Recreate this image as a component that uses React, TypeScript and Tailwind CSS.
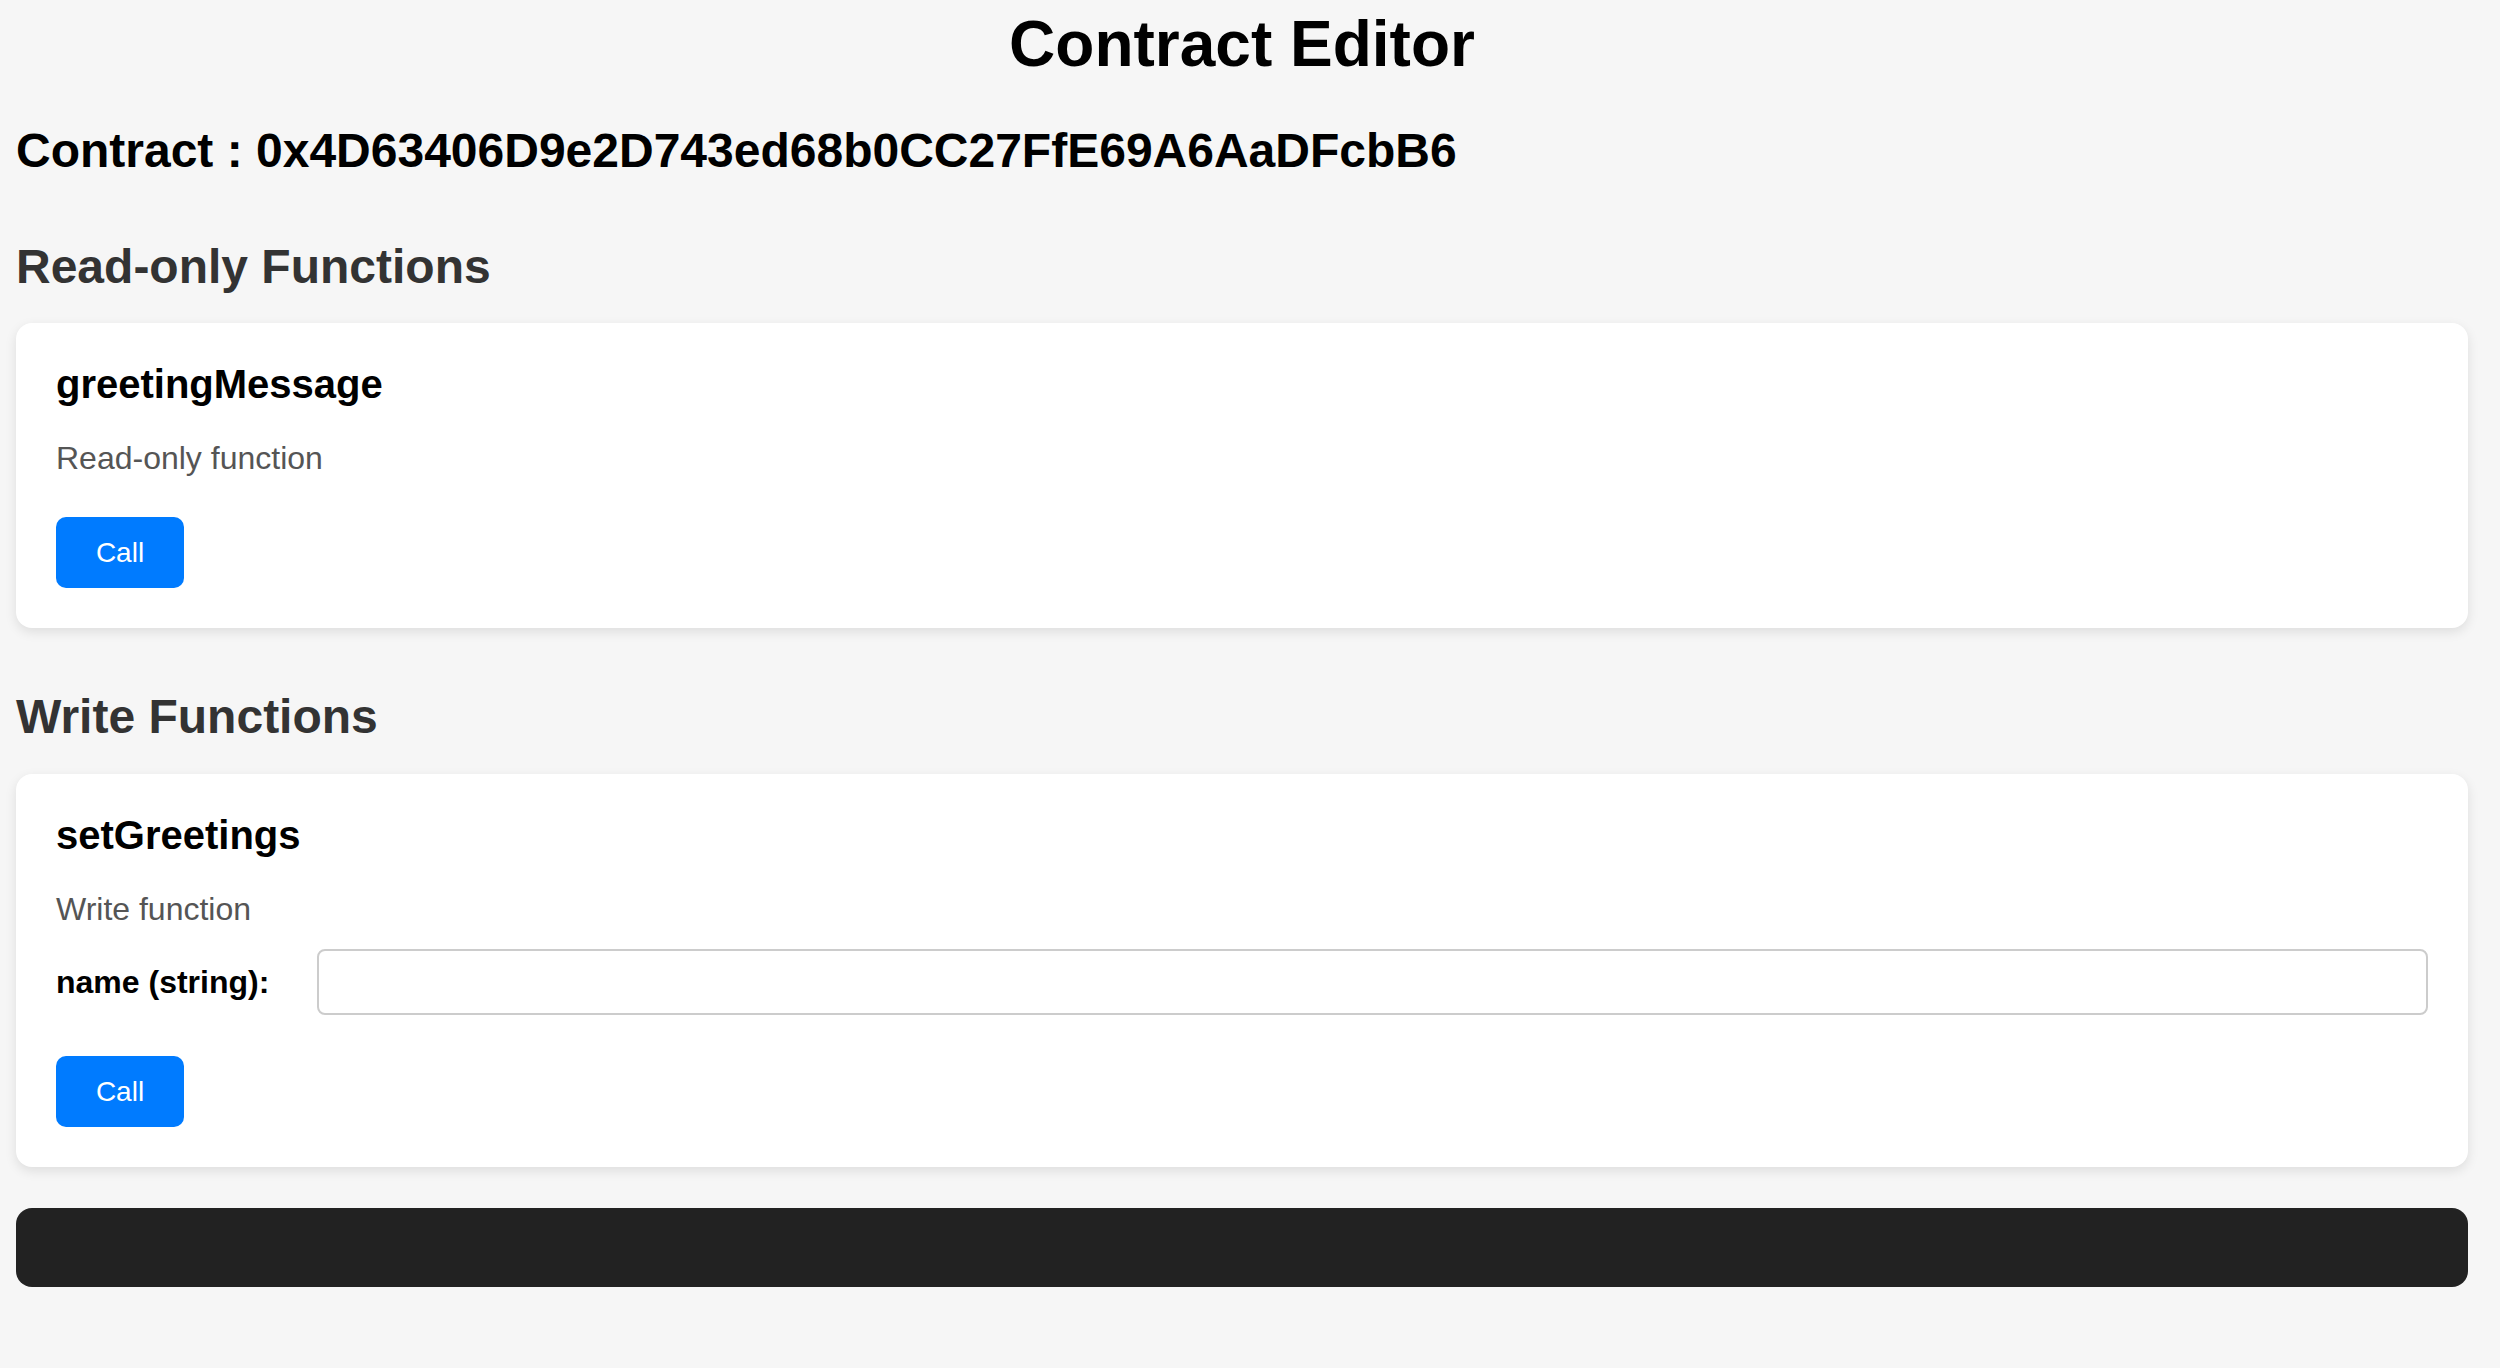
import { useState } from "react"

type AbiInput = {
  name: string
  type: string
}

type ContractFunction = {
  name: string
  kind: "read" | "write"
  inputs: AbiInput[]
}

const CONTRACT_ADDRESS = "0x4D63406D9e2D743ed68b0CC27FfE69A6AaDFcbB6"

const functions: ContractFunction[] = [
  { name: "greetingMessage", kind: "read", inputs: [] },
  { name: "setGreetings", kind: "write", inputs: [{ name: "name", type: "string" }] },
]

function FunctionCard({ fn }: { fn: ContractFunction }) {
  const [values, setValues] = useState<Record<string, string>>({})

  return (
    <div className="mt-[29px] rounded-[16px] bg-white p-[40px] shadow-[0_4px_12px_rgba(0,0,0,0.1)]">
      <h3 className="text-[40px] font-bold leading-[43px] text-black">{fn.name}</h3>
      <p className="mt-[34px] text-[32px] leading-[37px] text-[#555]">
        {fn.kind === "read" ? "Read-only function" : "Write function"}
      </p>
      {fn.inputs.map((input) => (
        <div key={input.name} className="mt-[21px] flex items-center">
          <label className="w-[241px] mr-[20px] shrink-0 text-[32px] font-bold leading-[37px] text-black">
            {input.name} ({input.type}):
          </label>
          <input
            type="text"
            value={values[input.name] ?? ""}
            onChange={(e) => setValues({ ...values, [input.name]: e.target.value })}
            className="h-[66px] flex-1 rounded-[8px] border-2 border-[#ccc] bg-white px-[16px] text-[28px] outline-none"
          />
        </div>
      ))}
      <button
        className={`${fn.inputs.length > 0 ? "mt-[41px]" : "mt-[40px]"} block h-[71px] w-[128px] rounded-[10px] bg-[#007bff] text-[28px] leading-[32px] text-white`}
      >
        Call
      </button>
    </div>
  )
}

export default function App() {
  const readFns = functions.filter((f) => f.kind === "read")
  const writeFns = functions.filter((f) => f.kind === "write")

  return (
    <div
      className="min-h-screen bg-[#f6f6f6] pl-[16px] pr-[32px] pt-[7px] pb-[80px]"
      style={{ fontFamily: '"Liberation Sans", Arial, Helvetica, sans-serif' }}
    >
      <h1 className="text-center text-[64px] font-bold leading-[74px] text-black">Contract Editor</h1>
      <h2 className="mt-[42px] text-[48px] font-bold leading-[55px] text-black">
        Contract : {CONTRACT_ADDRESS}
      </h2>

      <h2 className="mt-[61px] text-[48px] font-bold leading-[55px] text-[#333]">Read-only Functions</h2>
      {readFns.map((fn) => (
        <FunctionCard key={fn.name} fn={fn} />
      ))}

      <h2 className="mt-[61px] text-[48px] font-bold leading-[55px] text-[#333]">Write Functions</h2>
      <div className="[&>div]:mt-[30px]">
        {writeFns.map((fn) => (
          <FunctionCard key={fn.name} fn={fn} />
        ))}
      </div>

      <div className="mt-[41px] h-[79px] rounded-[16px] bg-[#222]" />
    </div>
  )
}
